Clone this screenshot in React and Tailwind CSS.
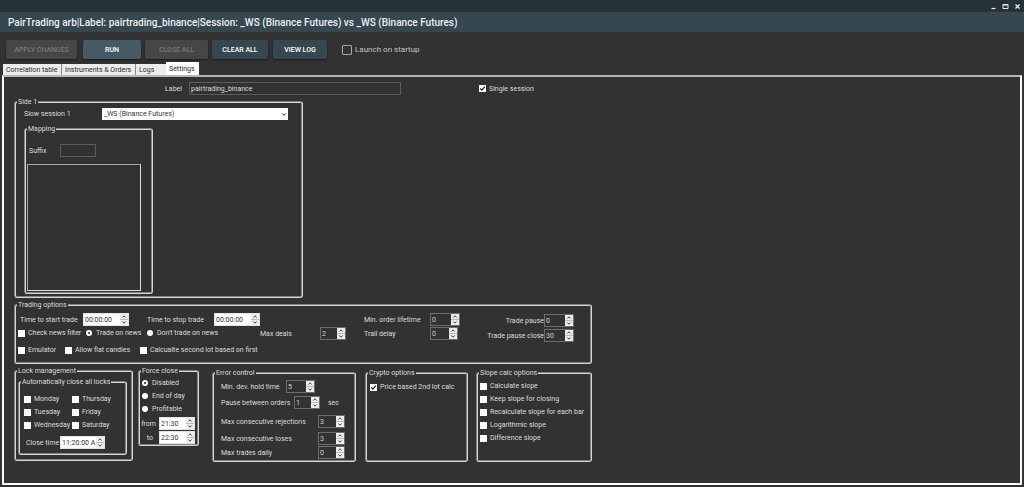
import { useState } from "react";
import clsx from "clsx";

const DAYS = ["Monday", "Thursday", "Tuesday", "Friday", "Wednesday", "Saturday"];

const SLOPE_OPTIONS = [
  "Calculate slope",
  "Keep slope for closing",
  "Recalculate slope for each bar",
  "Logarithmic slope",
  "Difference slope"
];

function Group({ title, className, bodyClass, children }) {
  return (
    <fieldset className={clsx("min-w-0 rounded-[3px] border-2 border-[#d3d7d8] [border-style:groove]", className)}>
      <legend className="ml-px h-[10px] px-px whitespace-nowrap">{title}</legend>
      <div className={bodyClass}>{children}</div>
    </fieldset>
  );
}

function Check({ label, checked = false, className }) {
  const [on, setOn] = useState(checked);

  return (
    <label className={clsx("flex items-center gap-[3px] whitespace-nowrap", className)}>
      <span className="grid">
        <input
          type="checkbox"
          className="col-start-1 row-start-1 size-[7px] appearance-none bg-white"
          checked={on}
          onChange={(e) => setOn(e.target.checked)}
        />
        {on && (
          <svg viewBox="0 0 7 7" className="pointer-events-none col-start-1 row-start-1 size-[7px]">
            <path d="M1.2 3.4 L2.9 5.1 L5.9 1.6" fill="none" stroke="#222" strokeWidth="1.3" />
          </svg>
        )}
      </span>
      {label}
    </label>
  );
}

function Radio({ label, name, checked = false, className }) {
  return (
    <label className={clsx("flex items-center gap-1 whitespace-nowrap", className)}>
      <input
        type="radio"
        name={name}
        defaultChecked={checked}
        className="size-[6px] appearance-none rounded-full bg-white checked:border-2 checked:border-white checked:bg-[#222]"
      />
      {label}
    </label>
  );
}

function Arrow({ down }) {
  return (
    <svg viewBox="0 0 8 5" className="h-[5px] w-2">
      <path d={down ? "M2.4 1.5 L4 3.2 L5.6 1.5" : "M2.4 3.5 L4 1.8 L5.6 3.5"} fill="none" stroke="#444" strokeWidth="1" />
    </svg>
  );
}

function Spinner({ id, value, light, className }) {
  return (
    <div
      className={clsx(
        "flex h-[13px] shrink-0 border",
        light ? "border-[#e4e4e4] bg-white text-[#333]" : "border-[#6c6c72] text-[#d2d2d2]",
        className
      )}
    >
      <input id={id} type="text" defaultValue={value} className="w-0 min-w-0 flex-1 pl-px outline-none" />
      <div className="flex w-2 flex-col justify-between bg-[#bbb]">
        <button type="button" aria-label="Increase" className="h-[5px] bg-[#ececec]">
          <Arrow />
        </button>
        <button type="button" aria-label="Decrease" className="h-[5px] bg-[#ececec]">
          <Arrow down />
        </button>
      </div>
    </div>
  );
}

function Field({ id, label, value, light, labelClass, boxClass, className, children }) {
  return (
    <div className={clsx("flex items-center", className)}>
      <label htmlFor={id} className={clsx("shrink-0 whitespace-nowrap", labelClass)}>
        {label}
      </label>
      <Spinner id={id} value={value} light={light} className={boxClass} />
      {children}
    </div>
  );
}

function TitleBar() {
  return (
    <header>
      <div className="flex h-3 items-center justify-end gap-[5px] bg-[#263238] pr-[3px] text-[#e8eaeb]">
        <button type="button" aria-label="Minimize">
          <svg viewBox="0 0 7 7" className="size-[7px]">
            <path d="M1.5 5.5 H5.5" stroke="currentColor" strokeWidth="1.2" />
          </svg>
        </button>
        <button type="button" aria-label="Maximize">
          <svg viewBox="0 0 7 7" className="size-[7px]">
            <path d="M1 1.5 H6 V5.5 H1 Z M1 2 H6" fill="none" stroke="currentColor" strokeWidth="1" />
          </svg>
        </button>
        <button type="button" aria-label="Close">
          <svg viewBox="0 0 7 7" className="size-[7px]">
            <path d="M1.5 1.5 L5.5 5.5 M5.5 1.5 L1.5 5.5" stroke="currentColor" strokeWidth="1.3" />
          </svg>
        </button>
      </div>
      <h1 className="h-5 bg-[#37474f] pl-2 text-[10px] leading-[21px] font-medium whitespace-nowrap text-[#eceff1]">
        PairTrading arb|Label: pairtrading_binance|Session: _WS (Binance Futures) vs _WS (Binance Futures)
      </h1>
    </header>
  );
}

function Toolbar() {
  const base = "h-[19px] rounded-[2px] text-[7px] font-medium shadow-[0_1px_2px_#1c1c1c]";

  return (
    <div className="flex items-center px-[6px] pt-2">
      <button type="button" disabled className={clsx(base, "w-[71px] bg-[#464646] text-[#7a7a7a]")}>
        APPLY CHANGES
      </button>
      <button type="button" className={clsx(base, "ml-[6px] w-[58px] bg-[#455a64] text-white")}>
        RUN
      </button>
      <button type="button" disabled className={clsx(base, "ml-1 w-[63px] bg-[#464646] text-[#7a7a7a]")}>
        CLOSE ALL
      </button>
      <button type="button" className={clsx(base, "ml-1 w-[56px] bg-[#37474f] text-white")}>
        CLEAR ALL
      </button>
      <button type="button" className={clsx(base, "ml-[5px] w-[54px] bg-[#37474f] text-white")}>
        VIEW LOG
      </button>
      <label className="ml-[15px] flex items-center gap-[3px] text-[8px] text-[#c4c4c4]">
        <input type="checkbox" className="size-[10px] appearance-none rounded-[1px] border border-[#a8a8a8] checked:bg-[#a8a8a8]" />
        Launch on startup
      </label>
    </div>
  );
}

function Tabs() {
  const tab = "h-[11px] bg-[#ececec] pl-[3px] text-left whitespace-nowrap";

  return (
    <div role="tablist" className="mt-[3px] flex items-end pl-[3px] text-[#2a2a2a]">
      <button type="button" role="tab" className={clsx(tab, "w-[59px] border-r border-[#888]")}>
        Correlation table
      </button>
      <button type="button" role="tab" className={clsx(tab, "w-[74px] border-r border-[#888]")}>
        Instruments & Orders
      </button>
      <button type="button" role="tab" className={clsx(tab, "w-[30px]")}>
        Logs
      </button>
      <button type="button" role="tab" aria-selected="true" className="h-[13px] w-[33px] bg-white pl-[3px] text-left">
        Settings
      </button>
    </div>
  );
}

function SideOne() {
  return (
    <Group title="Side 1" className="mt-[2px] h-[201px] w-[289px]" bodyClass="pl-2">
      <div className="flex items-center pt-px">
        <label htmlFor="session" className="w-[78px]">
          Slow session 1
        </label>
        <div className="grid w-[186px] items-center">
          <select
            id="session"
            className="col-start-1 row-start-1 h-3 appearance-none bg-white pl-[2px] text-[#333]"
          >
            <option>_WS (Binance Futures)</option>
          </select>
          <svg viewBox="0 0 8 5" className="pointer-events-none col-start-1 row-start-1 h-[5px] w-2 justify-self-end">
            <path d="M2.2 1.4 L4 3.4 L5.8 1.4" fill="none" stroke="#333" strokeWidth="1" />
          </svg>
        </div>
      </div>
      <Group title="Mapping" className="mt-1 h-[170px] w-[129px]" bodyClass="px-px pt-[10px]">
        <div className="flex items-center pl-[2px]">
          <label htmlFor="suffix" className="w-[31px]">
            Suffix
          </label>
          <input id="suffix" type="text" className="h-[13px] w-9 border border-[#5c5c5c] px-px outline-none" />
        </div>
        <div className="mt-[7px] h-[127px] w-[114px] border border-[#a9a9a9] border-r-[#dcdcdc] border-b-[#dcdcdc]" />
      </Group>
    </Group>
  );
}

function TradingOptions() {
  return (
    <Group title="Trading options" className="mt-[2px] h-[64px] w-[578px]" bodyClass="flex">
      <div className="w-[244px] pt-[3px] pl-[2px]">
        <div className="flex pl-[2px]">
          <Field id="start" label="Time to start trade" value="00:00:00" light labelClass="w-[63px]" boxClass="w-[46px]" />
          <Field
            id="stop"
            label="Time to stop trade"
            value="00:00:00"
            light
            className="ml-[18px]"
            labelClass="w-[67px]"
            boxClass="w-[46px]"
          />
        </div>
        <div className="mt-px flex h-3 items-center">
          <Check label="Check news filter" className="w-[68px]" />
          <Radio name="news" label="Trade on news" checked className="w-[61px]" />
          <Radio name="news" label="Don't trade on news" />
        </div>
        <div className="mt-[6px] flex items-center">
          <Check label="Emulator" className="w-[47px]" />
          <Check label="Allow flat candles" className="w-[75px]" />
          <Check label="Calcualte second lot based on first" />
        </div>
      </div>
      <Field id="deals" label="Max deals" value="2" className="mt-[17px] h-[13px]" labelClass="w-[60px]" boxClass="w-[26px]" />
      <div className="ml-[18px] flex flex-col gap-px pt-[3px]">
        <Field id="lifetime" label="Min. order lifetime" value="0" labelClass="w-[66px]" boxClass="w-[30px]" />
        <Field id="trail" label="Trail delay" value="0" labelClass="w-[66px]" boxClass="w-[28px]" />
      </div>
      <div className="ml-[27px] flex flex-col gap-[2px] pt-1">
        <Field id="pause" label="Trade pause" value="0" labelClass="w-[57px] text-right" boxClass="w-[30px]" />
        <Field id="pauseClose" label="Trade pause close" value="30" labelClass="w-[57px] text-right" boxClass="w-[30px]" />
      </div>
    </Group>
  );
}

function LockManagement() {
  return (
    <Group title="Lock management" className="h-[95px] w-[119px]" bodyClass="pt-px pl-[2px]">
      <Group title="Automatically close all locks" className="h-[78px] w-[109px]">
        <div className="grid grid-cols-[48px_1fr] gap-y-[3px] pt-[7px] pl-1">
          {DAYS.map((day) => (
            <Check key={day} label={day} />
          ))}
        </div>
        <Field
          id="closeTime"
          label="Close time"
          value="11:20:00 A"
          light
          className="mt-[6px] pl-[6px]"
          labelClass="w-[34px]"
          boxClass="w-[45px]"
        />
      </Group>
    </Group>
  );
}

function ForceClose() {
  return (
    <Group title="Force close" className="ml-[5px] h-[80px] w-[61px]">
      <div className="flex flex-col gap-[3px] pt-[2px] pl-[2px]">
        <Radio name="force" label="Disabled" checked />
        <Radio name="force" label="End of day" />
        <Radio name="force" label="Profitable" />
      </div>
      <div className="mt-[3px] flex flex-col gap-px">
        <Field id="from" label="from" value="21:30" light labelClass="w-[19px] pr-[3px] text-right" boxClass="w-[36px]" />
        <Field id="to" label="to" value="22:30" light labelClass="w-[19px] pr-[6px] text-right" boxClass="w-[36px]" />
      </div>
    </Group>
  );
}

function ErrorControl() {
  return (
    <Group title="Error control" className="mt-[2px] ml-[13px] h-[94px] w-[144px]" bodyClass="pt-[2px] pl-[7px]">
      <Field id="hold" label="Min. dev. hold time" value="5" labelClass="w-[65px]" boxClass="w-[29px]" />
      <Field id="orders" label="Pause between orders" value="1" className="mt-[3px]" labelClass="w-[73px]" boxClass="w-[26px]">
        <span className="pl-2">sec</span>
      </Field>
      <Field
        id="rejections"
        label="Max consecutive rejections"
        value="3"
        className="mt-[6px]"
        labelClass="w-[97px]"
        boxClass="w-[27px]"
      />
      <Field id="loses" label="Max consecutive loses" value="3" className="mt-1" labelClass="w-[97px]" boxClass="w-[27px]" />
      <Field id="daily" label="Max trades daily" value="0" className="mt-px" labelClass="w-[97px]" boxClass="w-[27px]" />
    </Group>
  );
}

function App() {
  return (
    <div className="flex min-h-screen flex-col bg-[#323232] font-[Roboto,sans-serif] text-[7px] leading-[10px] text-[#dcdcdc]">
      <TitleBar />
      <Toolbar />
      <Tabs />
      <main className="mx-[2px] mb-[2px] flex-1 border-2 border-t-[#b5b5b5] border-r-white border-b-white border-l-white pb-5 pl-[10px]">
        <div className="mt-[5px] flex items-center">
          <label htmlFor="label" className="w-[175px] pr-[7px] text-right">
            Label
          </label>
          <input
            id="label"
            type="text"
            defaultValue="pairtrading_binance"
            className="h-[13px] w-[212px] border border-[#5c5c5c] pl-px outline-none"
          />
          <Check label="Single session" checked className="ml-[78px]" />
        </div>
        <SideOne />
        <TradingOptions />
        <div className="mt-[2px] flex items-start">
          <LockManagement />
          <ForceClose />
          <ErrorControl />
          <Group title="Crypto options" className="mt-[2px] ml-[9px] h-[94px] w-[103px]" bodyClass="pt-1 pl-[3px]">
            <Check label="Price based 2nd lot calc" checked />
          </Group>
          <Group
            title="Slope calc options"
            className="mt-[2px] ml-2 h-[94px] w-[116px]"
            bodyClass="flex flex-col gap-[3px] pt-[3px] pl-[2px]"
          >
            {SLOPE_OPTIONS.map((option) => (
              <Check key={option} label={option} />
            ))}
          </Group>
        </div>
      </main>
    </div>
  );
}

export default App;
